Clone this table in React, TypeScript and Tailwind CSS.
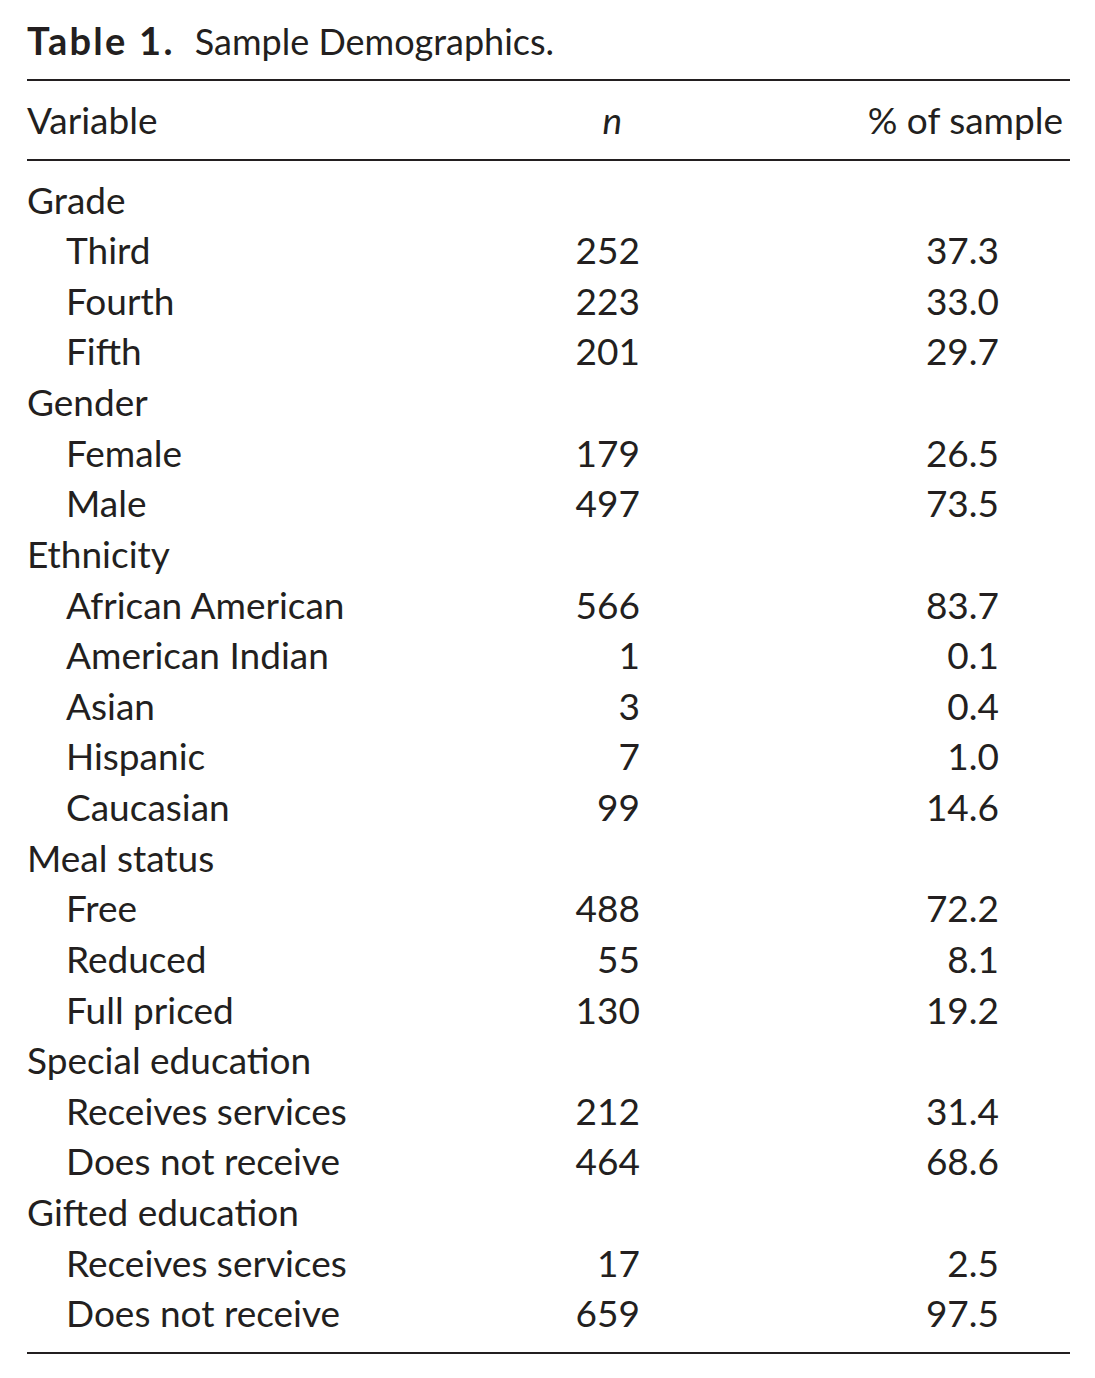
const font = { fontFamily: 'Lato, "Open Sans", sans-serif' };

type Row = { label: string; n?: string; pct?: string; indent?: boolean };

const rows: Row[] = [
  { label: 'Grade' },
  { label: 'Third', n: '252', pct: '37.3', indent: true },
  { label: 'Fourth', n: '223', pct: '33.0', indent: true },
  { label: 'Fifth', n: '201', pct: '29.7', indent: true },
  { label: 'Gender' },
  { label: 'Female', n: '179', pct: '26.5', indent: true },
  { label: 'Male', n: '497', pct: '73.5', indent: true },
  { label: 'Ethnicity' },
  { label: 'African American', n: '566', pct: '83.7', indent: true },
  { label: 'American Indian', n: '1', pct: '0.1', indent: true },
  { label: 'Asian', n: '3', pct: '0.4', indent: true },
  { label: 'Hispanic', n: '7', pct: '1.0', indent: true },
  { label: 'Caucasian', n: '99', pct: '14.6', indent: true },
  { label: 'Meal status' },
  { label: 'Free', n: '488', pct: '72.2', indent: true },
  { label: 'Reduced', n: '55', pct: '8.1', indent: true },
  { label: 'Full priced', n: '130', pct: '19.2', indent: true },
  { label: 'Special education' },
  { label: 'Receives services', n: '212', pct: '31.4', indent: true },
  { label: 'Does not receive', n: '464', pct: '68.6', indent: true },
  { label: 'Gifted education' },
  { label: 'Receives services', n: '17', pct: '2.5', indent: true },
  { label: 'Does not receive', n: '659', pct: '97.5', indent: true },
];

export default function App() {
  return (
    <div className="min-h-screen w-[1095px] bg-white pl-[27px] pt-[17px] text-[#231f20]" style={font}>
      <div className="w-[1043px]">
        {/* Caption */}
        <h1 className="h-[46px] whitespace-nowrap text-[36px] leading-[46px]">
          <span className="text-[38px] font-bold tracking-[0.06em]">Table 1.</span>
          <span className="ml-[20px]">Sample Demographics.</span>
        </h1>

        <div className="mt-[16px] border-t-2 border-[#231f20]" />

        {/* Column headers */}
        <div className="flex h-[78px] items-center text-[37px]">
          <div className="w-[513px]">Variable</div>
          <div className="w-[100px] pr-[18px] text-right italic">n</div>
          <div className="flex-1 pr-[7px] text-right">% of sample</div>
        </div>

        <div className="border-t-2 border-[#231f20]" />

        {/* Body */}
        <div className="pt-[13px] pb-[14px]">
          {rows.map((r, i) => (
            <div key={i} className="flex h-[50.64px] items-center whitespace-nowrap text-[37px]">
              <div className={r.indent ? 'w-[513px] pl-[39px]' : 'w-[513px]'}>{r.label}</div>
              <div className="w-[100px] text-right">{r.n}</div>
              <div className="w-[359px] text-right">{r.pct}</div>
            </div>
          ))}
        </div>

        <div className="border-t-2 border-[#231f20]" />
      </div>
    </div>
  );
}
